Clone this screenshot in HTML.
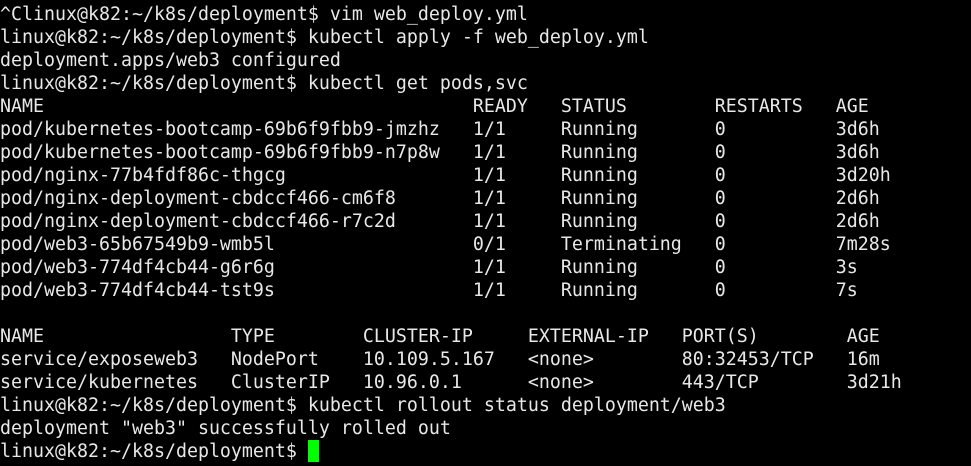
<!DOCTYPE html>
<html><head><style>
html,body{margin:0;padding:0;background:#000;width:971px;height:466px;overflow:hidden}
pre{margin:0;padding:3px 0 0 0;font-family:"DejaVu Sans Mono","Liberation Mono",monospace;font-size:18.27px;line-height:23px;color:#e8e8e8;white-space:pre}
.c{background:#00ff00;display:inline-block;width:11px;height:22px;vertical-align:-5px}
</style></head><body><pre>^Clinux@k82:~/k8s/deployment$ vim web_deploy.yml
linux@k82:~/k8s/deployment$ kubectl apply -f web_deploy.yml
deployment.apps/web3 configured
linux@k82:~/k8s/deployment$ kubectl get pods,svc
NAME                                       READY   STATUS        RESTARTS   AGE
pod/kubernetes-bootcamp-69b6f9fbb9-jmzhz   1/1     Running       0          3d6h
pod/kubernetes-bootcamp-69b6f9fbb9-n7p8w   1/1     Running       0          3d6h
pod/nginx-77b4fdf86c-thgcg                 1/1     Running       0          3d20h
pod/nginx-deployment-cbdccf466-cm6f8       1/1     Running       0          2d6h
pod/nginx-deployment-cbdccf466-r7c2d       1/1     Running       0          2d6h
pod/web3-65b67549b9-wmb5l                  0/1     Terminating   0          7m28s
pod/web3-774df4cb44-g6r6g                  1/1     Running       0          3s
pod/web3-774df4cb44-tst9s                  1/1     Running       0          7s

NAME                 TYPE        CLUSTER-IP     EXTERNAL-IP   PORT(S)        AGE
service/exposeweb3   NodePort    10.109.5.167   &lt;none&gt;        80:32453/TCP   16m
service/kubernetes   ClusterIP   10.96.0.1      &lt;none&gt;        443/TCP        3d21h
linux@k82:~/k8s/deployment$ kubectl rollout status deployment/web3
deployment "web3" successfully rolled out
linux@k82:~/k8s/deployment$ <span class="c"></span></pre></body></html>
